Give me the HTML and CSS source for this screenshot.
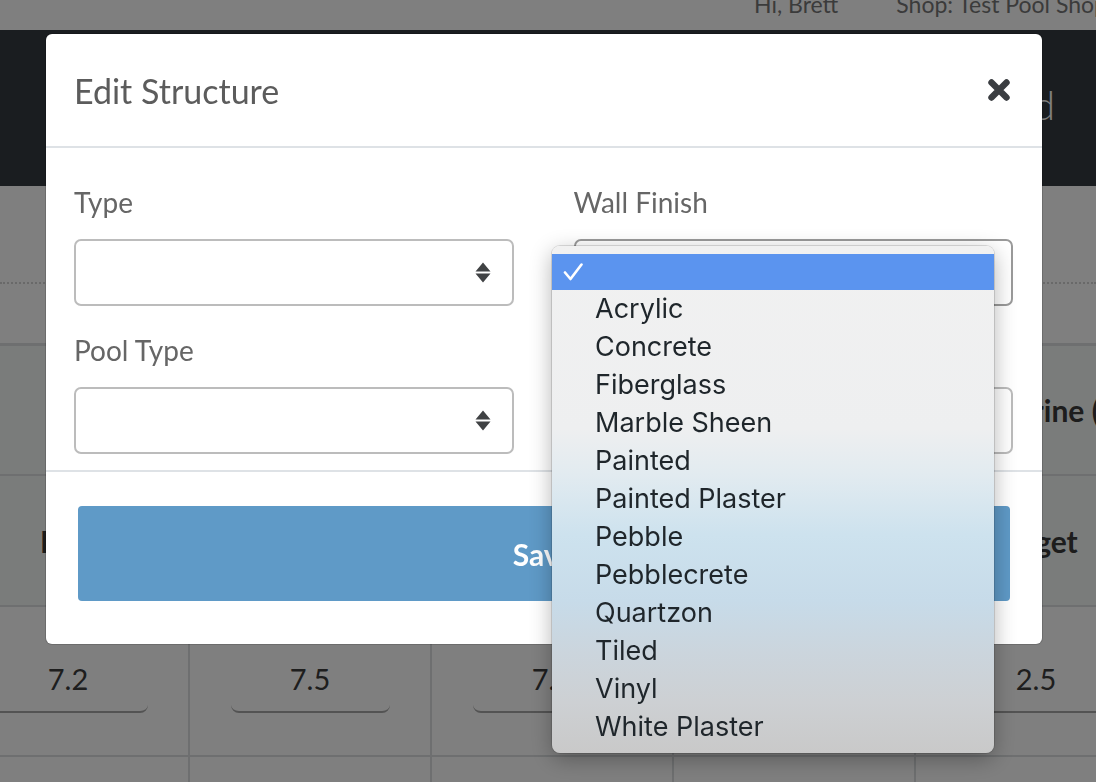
FILE: index.html
```html
<!DOCTYPE html>
<html lang="en">
<head>
    <meta charset="UTF-8">
    <meta name="viewport" content="width=device-width, initial-scale=1.0">
    <title>Edit Structure</title>
    <link rel="stylesheet" href="styles.css">
</head>
<body>
<div class="topbar">
    <span class="greeting">Hi, Brett</span>
    <span class="divider"></span>
    <span class="shop">Shop: Test Pool Shop</span>
</div>
<header class="page-header">
    <h1>Pool Record</h1>
</header>

<div class="filters"></div>

<div class="readings">
    <div class="row head">
        <div class="cell">pH</div>
        <div class="cell">pH</div>
        <div class="cell">Alkalinity</div>
        <div class="cell">Alkalinity</div>
        <div class="cell">Free Chlorine (ppm)</div>
    </div>
    <div class="row head sub">
        <div class="cell">Low</div>
        <div class="cell">High</div>
        <div class="cell">Low</div>
        <div class="cell">High</div>
        <div class="cell">Target</div>
    </div>
    <div class="row values">
        <div class="cell"><span class="reading-input">7.2</span></div>
        <div class="cell"><span class="reading-input">7.5</span></div>
        <div class="cell"><span class="reading-input">7.8</span></div>
        <div class="cell"><span class="reading-input">1.0</span></div>
        <div class="cell"><span class="reading-input">2.5</span></div>
    </div>
    <div class="row values last">
        <div class="cell"></div>
        <div class="cell"></div>
        <div class="cell"></div>
        <div class="cell"></div>
        <div class="cell"></div>
    </div>
</div>

<!-- modal -->
<div class="backdrop"></div>
<div class="modal">
    <div class="modal-header">
        <h2 class="modal-title">Edit Structure</h2>
        <span class="close">
            <svg width="24" height="24" viewBox="0 0 24 24">
                <path d="M4.5 4.5 L19.5 19.5 M19.5 4.5 L4.5 19.5" stroke="#3a3d41" stroke-width="6.4" stroke-linecap="round" fill="none"/>
            </svg>
        </span>
    </div>
    <div class="modal-body">
        <div class="form-group">
            <label>Type</label>
            <div class="select-box">
                <svg class="arrows" width="16" height="21" viewBox="0 0 16 21">
                    <path d="M8 0.5 L15.5 9.5 L0.5 9.5 Z M0.5 11.5 L15.5 11.5 L8 20.5 Z" fill="#404244"/>
                </svg>
            </div>
        </div>
        <div class="form-group">
            <label>Wall Finish</label>
            <div class="select-box open"></div>
        </div>
        <div class="form-group">
            <label>Pool Type</label>
            <div class="select-box">
                <svg class="arrows" width="16" height="21" viewBox="0 0 16 21">
                    <path d="M8 0.5 L15.5 9.5 L0.5 9.5 Z M0.5 11.5 L15.5 11.5 L8 20.5 Z" fill="#404244"/>
                </svg>
            </div>
        </div>
        <div class="form-group">
            <label>Surface</label>
            <div class="select-box"></div>
        </div>
    </div>
    <div class="modal-footer">
        <button class="save-button">Save</button>
    </div>
</div>

<!-- open list of the Wall Finish select -->
<ul class="select-menu">
    <li class="option selected">
        <svg width="20" height="18" viewBox="0 0 20 18">
            <polyline points="2,9.5 7.5,16 18.5,1.5" stroke="#fff" stroke-width="2.6" stroke-linecap="round" stroke-linejoin="round" fill="none"/>
        </svg>
    </li>
    <li class="option">Acrylic</li>
    <li class="option">Concrete</li>
    <li class="option">Fiberglass</li>
    <li class="option">Marble Sheen</li>
    <li class="option">Painted</li>
    <li class="option">Painted Plaster</li>
    <li class="option">Pebble</li>
    <li class="option">Pebblecrete</li>
    <li class="option">Quartzon</li>
    <li class="option">Tiled</li>
    <li class="option">Vinyl</li>
    <li class="option">White Plaster</li>
</ul>
</body>
</html>
```

FILE: styles.css
```css
* {
    box-sizing: border-box;
}

body {
    margin: 0;
    width: 1096px;
    height: 782px;
    overflow: hidden;
    background: #fff;
    font-family: Lato, "Liberation Sans", sans-serif;
}

/* 顶部用户栏 */
.topbar {
    height: 30px;
    background: #fff;
    display: flex;
    align-items: flex-start;
    padding-left: 754px;
    white-space: nowrap;
    overflow: hidden;
    color: #777;
    font-size: 23px;
    line-height: 1;
}

.greeting,
.shop {
    margin-top: -7px;
}

.divider {
    width: 2px;
    height: 26px;
    background: #cfcfcf;
    margin: 0 31px 0 27px;
}

.page-header {
    height: 156px;
    background: #343a40;
    display: flex;
    justify-content: flex-end;
    align-items: center;
    padding: 0 41px 6px 0;
}

.page-header h1 {
    margin: 0;
    color: #fff;
    font-size: 40px;
    font-weight: 300;
}

.filters {
    height: 98px;
    border-bottom: 2px dotted #d2d2d2;
}

/* 读数表格 */
.readings {
    margin: 59px 0 0 -52px;
    width: 1210px;
    border-top: 3px solid #dcdfe1;
}

.row {
    display: grid;
    grid-template-columns: repeat(5, 242px);
    border-bottom: 2px solid #dcdfe1;
}

.row.head {
    height: 130px;
    background: #f5f8f7;
}

.row.head.sub {
    height: 131px;
}

.row.values {
    height: 150px;
}

.row.values.last {
    height: 60px;
}

.cell {
    display: flex;
    justify-content: center;
    align-items: center;
    border-right: 2px solid #dcdfe1;
    white-space: nowrap;
}

.row.head .cell {
    font-size: 30px;
    font-weight: bold;
    color: #3a3a3a;
}

.reading-input {
    width: 159px;
    height: 66px;
    margin-bottom: 3px;
    display: flex;
    justify-content: center;
    align-items: center;
    border-bottom: 2px solid #a6a6a6;
    border-radius: 0 0 8px 8px;
    font-size: 29px;
    color: #3c3c3c;
}

/* 弹窗 */
.backdrop {
    position: fixed;
    top: 0;
    left: 0;
    right: 0;
    bottom: 0;
    background: rgba(0, 0, 0, 0.5);
}

.modal {
    position: fixed;
    top: 34px;
    left: 46px;
    width: 996px;
    background: #fff;
    border-radius: 6px;
    box-shadow: 0 0 0 1px rgba(0, 0, 0, 0.15);
}

.modal-header {
    height: 114px;
    display: flex;
    justify-content: space-between;
    align-items: center;
    padding: 0 31px 0 28px;
    border-bottom: 2px solid #dee2e6;
}

.modal-title {
    margin: 0;
    font-size: 34px;
    font-weight: normal;
    color: #5c5c5c;
}

.close {
    display: flex;
}

.modal-body {
    display: grid;
    grid-template-columns: 1fr 1fr;
    column-gap: 60px;
    row-gap: 26px;
    padding: 36px 29px 16px 28px;
}

.form-group label {
    display: block;
    font-size: 28px;
    line-height: 36px;
    color: #666;
    margin-bottom: 19px;
}

.select-box {
    height: 67px;
    border: 2px solid #bcbcbc;
    border-radius: 7px;
    display: flex;
    justify-content: flex-end;
    align-items: center;
    padding-right: 21px;
}

.select-box.open {
    border-color: #9a9a9a;
}

.modal-footer {
    border-top: 2px solid #dee2e6;
    padding: 34px 32px 43px;
}

.save-button {
    display: block;
    width: 100%;
    height: 95px;
    border: none;
    border-radius: 4px;
    background: #5f9ac7;
    color: #fff;
    font-family: Lato, "Liberation Sans", sans-serif;
    font-size: 30px;
    font-weight: bold;
}

/* 下拉菜单 */
.select-menu {
    position: fixed;
    top: 246px;
    left: 552px;
    width: 442px;
    margin: 0;
    padding: 8px 0 7px;
    list-style: none;
    border-radius: 8px;
    background: linear-gradient(to bottom,
        #f1f1f1 0%,
        #eeeff0 36%,
        #e2ebf0 45%,
        #cde2ee 57%,
        #c7dbe9 70%,
        #cbd5dd 80%,
        #cdd0d3 90%,
        #c9c9c9 100%);
    box-shadow: 0 0 0 1px rgba(0, 0, 0, 0.12), 0 6px 22px rgba(0, 0, 0, 0.3);
    font-family: Inter, "Liberation Sans", sans-serif;
    font-size: 27px;
    color: #1f262b;
}

.option {
    height: 38px;
    line-height: 38px;
    padding-left: 43px;
    white-space: nowrap;
}

.option.selected {
    height: 36px;
    background: #5b94ef;
    padding-left: 11px;
    display: flex;
    align-items: center;
}
```
